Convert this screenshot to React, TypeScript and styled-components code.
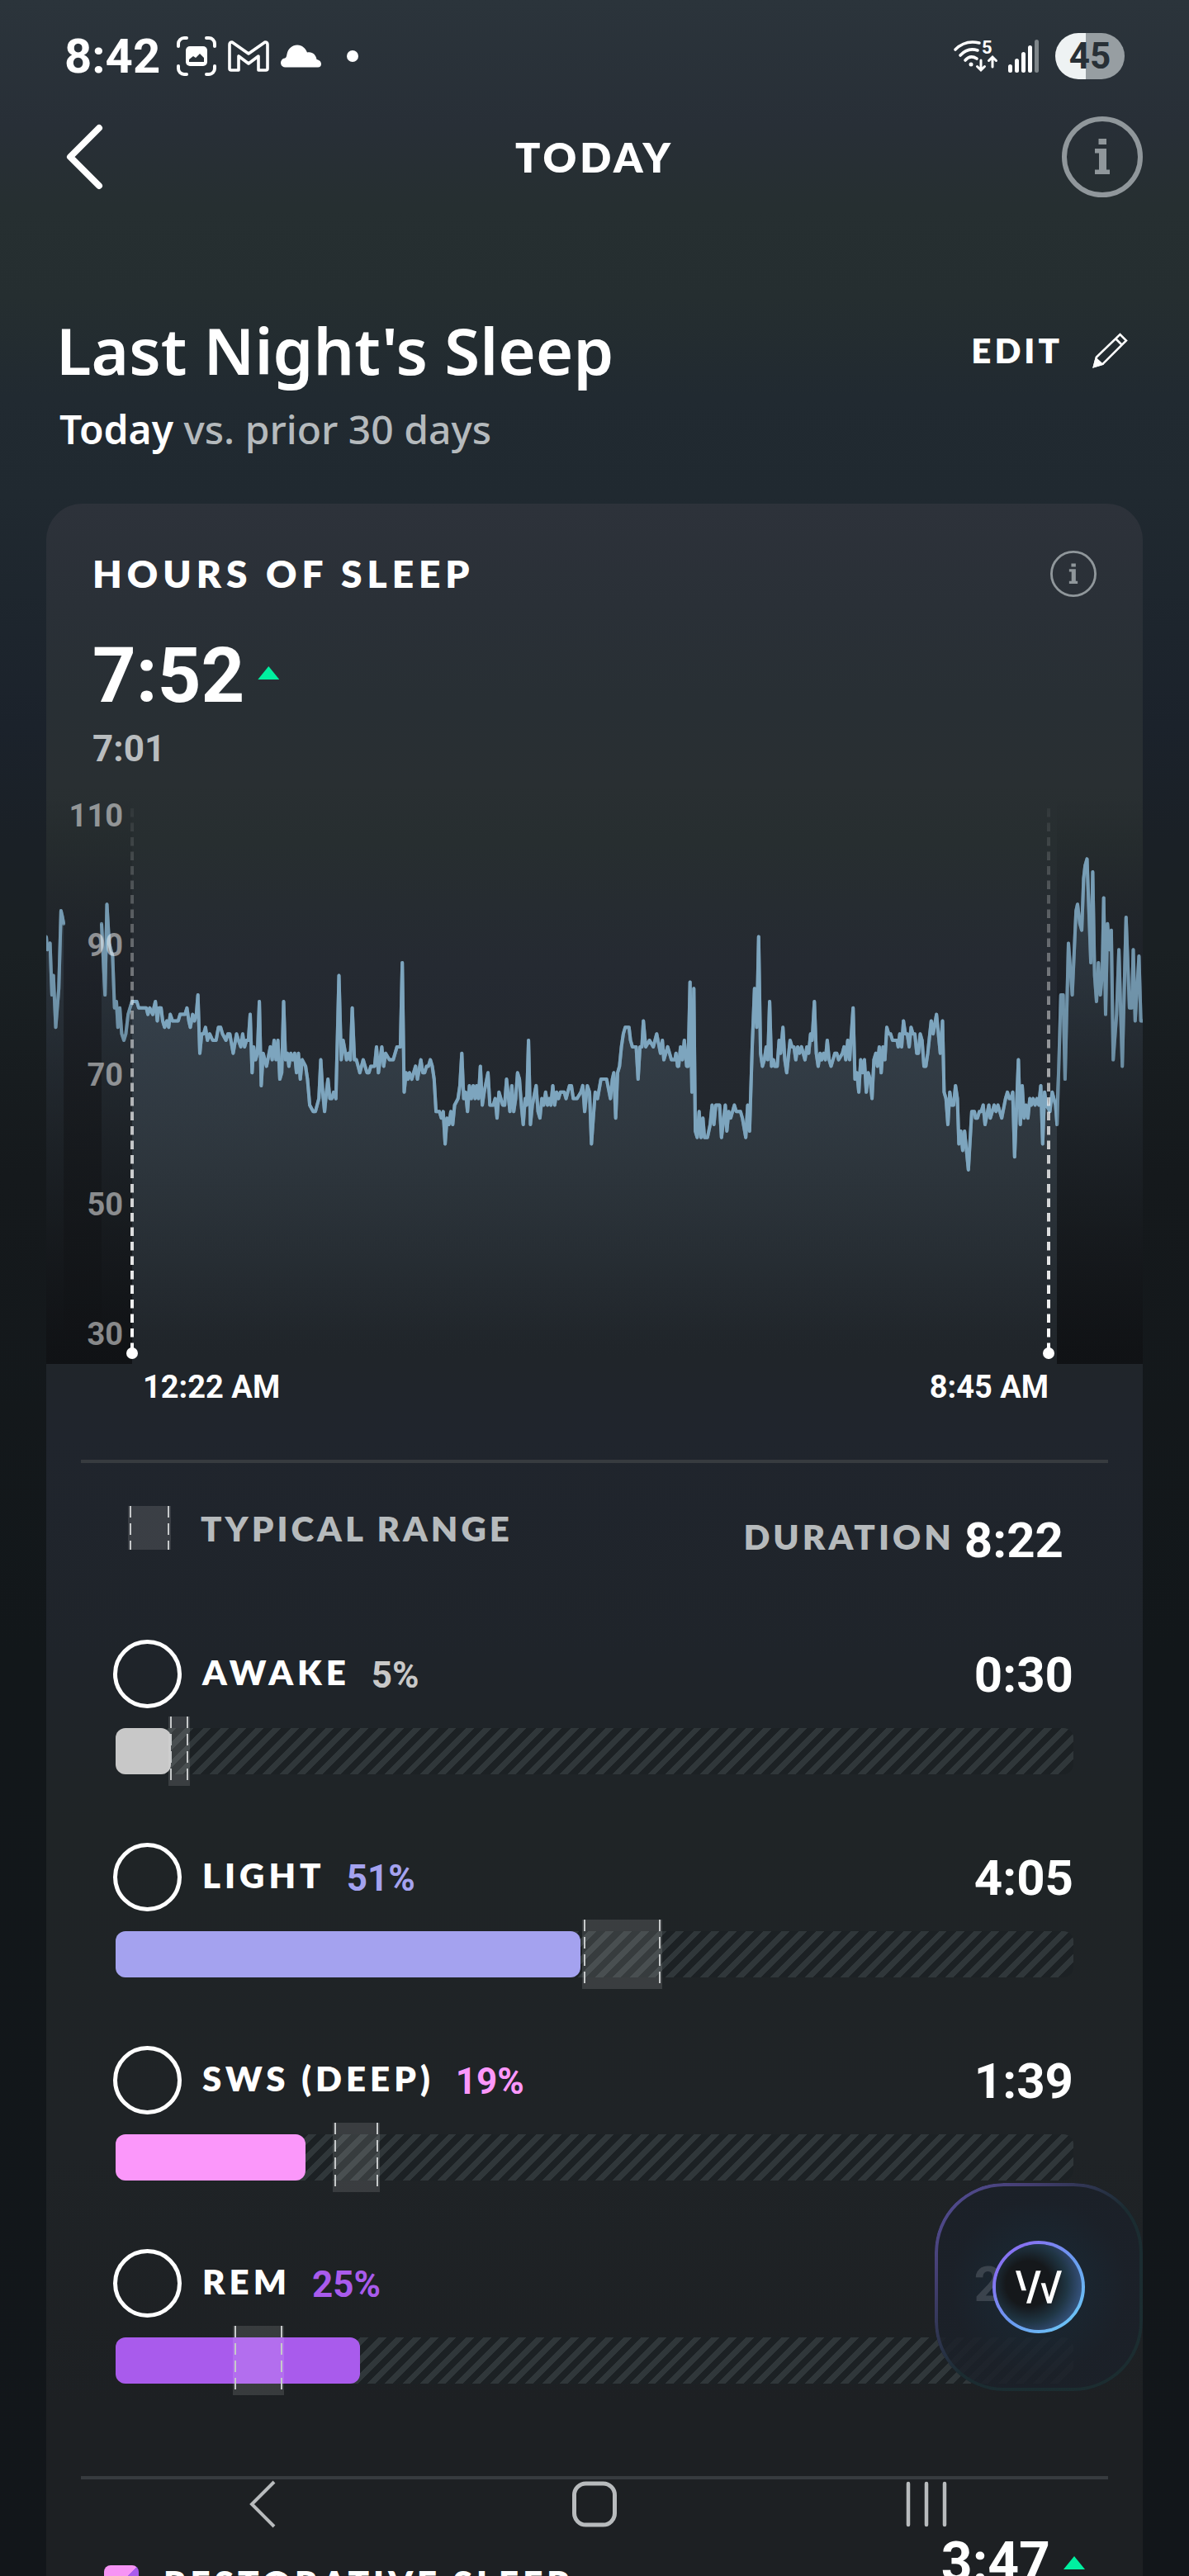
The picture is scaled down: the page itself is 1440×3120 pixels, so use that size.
import React from 'react';
import styled, { createGlobalStyle } from 'styled-components';

const GlobalStyle = createGlobalStyle`
  *, *::before, *::after { box-sizing: border-box; }
  html, body { margin: 0; padding: 0; background: #12161a; }
  button { background: none; border: 0; padding: 0; color: inherit; font: inherit; cursor: pointer; }
  h1, h2, p, ul { margin: 0; padding: 0; }
  svg { display: block; overflow: visible; }
`;

const sans = `Lato, 'Open Sans', sans-serif`;
const heading = `'Noto Sans', 'Open Sans', sans-serif`;
const digits = `Roboto, 'Liberation Sans', sans-serif`;

const Screen = styled.div`
  position: relative;
  height: 100vh;
  overflow: hidden;
  color: #fff;
  font-family: ${sans};
  background: linear-gradient(
    180deg, #2b343b 0, #282f37 150px, #262f31 250px, #252e30 360px, #212a31 480px,
    #202930 600px, #1b222b 880px, #1a2026 1020px, #1a2023 1150px, #15191c 1420px, #12171a 2000px, #12161a 100%
  );
`;

/* ---------- status bar ---------- */

const StatusBar = styled.div`
  display: flex;
  align-items: center;
  justify-content: space-between;
  height: 136px;
  padding: 0 78px 0 78px;
`;

const StatusGroup = styled.div<{ $gap: number }>`
  display: flex;
  align-items: center;
  gap: ${(p) => p.$gap}px;
`;

const Clock = styled.span`
  margin-right: 6px;
  font: 700 58px/64px ${digits};
`;

const Dot = styled.span`
  width: 14px;
  height: 14px;
  margin-left: 16px;
  border-radius: 50%;
  background: #fff;
`;

const Battery = styled.span`
  display: grid;
  place-items: center;
  width: 84px;
  height: 56px;
  margin-left: 8px;
  border-radius: 28px;
  background: linear-gradient(90deg, #eef2f3 44%, #979ea2 44%);
  color: #283036;
  font: 700 44px/56px ${digits};
`;

/* ---------- app bar ---------- */

const AppBar = styled.header`
  display: grid;
  grid-template-columns: 1fr auto 1fr;
  align-items: center;
  height: 108px;
  padding: 0 56px;
`;

const AppTitle = styled.h1`
  font: 800 50px/64px ${sans};
  letter-spacing: 4px;
`;

const IconButton = styled.button<{ $end?: boolean }>`
  display: inline-flex;
  justify-self: ${(p) => (p.$end ? 'end' : 'start')};
  padding-left: ${(p) => (p.$end ? 0 : 22)}px;
  color: ${(p) => (p.$end ? '#90979b' : '#fff')};
`;

/* ---------- page body ---------- */

const Main = styled.main`
  padding: 132px 56px 0;
`;

const TitleRow = styled.div`
  display: flex;
  align-items: center;
  justify-content: space-between;
  padding: 0 18px 0 12px;
`;

const PageTitle = styled.h2`
  font: 600 78px/96px ${heading};
`;

const EditButton = styled.button`
  display: flex;
  align-items: center;
  gap: 36px;
  font: 800 42px/56px ${sans};
  letter-spacing: 4px;
`;

const Subtitle = styled.p`
  margin-top: 16px;
  padding-left: 16px;
  color: #b5babd;
  font: 500 48px/64px ${heading};

  strong { color: #fff; font-weight: 600; }
`;

const Card = styled.section`
  margin-top: 58px;
  padding-top: 57px;
  border-radius: 44px 44px 0 0;
  background: linear-gradient(
    180deg, #2d323a 0, #2a3037 120px, #282f34 240px, #292f32 340px, #272e30 410px,
    #252a32 560px, #22272c 800px, #20252a 1040px, #20252d 1130px, #1f242a 1400px,
    #1f2426 1600px, #1f2326 2000px, #1d2023 2300px, #1d2023 100%
  );
`;

const CardHead = styled.div`
  display: flex;
  align-items: center;
  justify-content: space-between;
  padding: 0 56px;
`;

const Label = styled.span<{ $muted?: boolean }>`
  color: ${(p) => (p.$muted ? '#b6babc' : '#fff')};
  font: 800 42px/50px ${sans};
  letter-spacing: ${(p) => (p.$muted ? 4 : 5)}px;
`;

const CardTitle = styled.h2`
  font: 800 46px/56px ${sans};
  letter-spacing: 6px;
`;

const Headline = styled.div`
  display: flex;
  align-items: center;
  gap: 16px;
  margin-top: 48px;
  padding: 0 56px;
  font: 700 92px/96px ${digits};
`;

const Baseline = styled.p`
  margin: 14px 0 28px;
  padding: 0 56px;
  color: #b9bdbf;
  font: 700 44px/52px ${digits};
`;

const UpArrow = styled.span`
  width: 26px;
  height: 16px;
  background: #00f0a0;
  clip-path: polygon(50% 0, 100% 100%, 0 100%);

  ${Headline} & { margin-bottom: 8px; }
`;

/* ---------- chart ---------- */

const ChartFrame = styled.div`
  position: relative;

  svg { width: 100%; height: 691px; overflow: hidden; }
`;

const Axis = styled.div`
  position: absolute;
  top: 7px;
  left: 0;
  display: flex;
  flex-direction: column;
  gap: 117px;
  width: 93px;
  text-align: right;
  color: rgba(255, 255, 255, 0.5);
  font: 700 38px/40px ${digits};
`;

const TimeRow = styled.div`
  display: flex;
  justify-content: space-between;
  padding: 0 114px 0 117px;
  font: 700 38px/56px ${digits};
`;

const Divider = styled.hr<{ $space: number }>`
  height: 4px;
  margin: ${(p) => p.$space}px 42px 0;
  border: 0;
  background: #373b3f;
`;

/* ---------- sleep stages ---------- */

const rangeMarks = `
  background:
    repeating-linear-gradient(180deg, #c6c9ca 0 14px, transparent 14px 21px) 2px 0 / 2px 100% no-repeat,
    repeating-linear-gradient(180deg, #c6c9ca 0 14px, transparent 14px 21px) calc(100% - 2px) 0 / 2px 100% no-repeat,
    rgba(255, 255, 255, 0.12);
`;

const Legend = styled.div`
  display: flex;
  align-items: flex-start;
  justify-content: space-between;
  padding: 52px 96px 0 99px;
`;

const LegendItem = styled.div`
  display: flex;
  align-items: center;
  gap: 36px;
`;

const RangeSwatch = styled.span`
  width: 52px;
  height: 53px;
  ${rangeMarks}
`;

const Duration = styled.div`
  display: flex;
  align-items: flex-start;
  gap: 12px;
  padding-top: 12px;
`;

const Time = styled.span`
  font: 700 60px/60px ${digits};
`;

const StageList = styled.ul`
  display: flex;
  flex-direction: column;
  gap: 82px;
  margin-top: 89px;
  padding: 0 84px;
  list-style: none;
`;

const StageHead = styled.label`
  display: flex;
  align-items: center;
  height: 84px;
  margin-left: -3px;
  cursor: pointer;

  ${Label} { margin: 0 26px 0 25px; padding-bottom: 4px; }
  ${Time} { margin-left: auto; padding-top: 4px; }
`;

const StageRadio = styled.input`
  appearance: none;
  width: 83px;
  height: 83px;
  margin: 0;
  border: 5px solid #fff;
  border-radius: 50%;
`;

const Percent = styled.span<{ $color: string }>`
  padding-top: 4px;
  color: ${(p) => p.$color};
  font: 700 44px/54px ${digits};
`;

const Track = styled.div`
  position: relative;
  height: 56px;
  margin-top: 24px;
  border-radius: 12px;
  background: repeating-linear-gradient(135deg, #30373a 0 7px, #1c2124 7px 15px);
`;

const Fill = styled.div<{ $color: string }>`
  height: 100%;
  border-radius: 12px;
  background: ${(p) => p.$color};
`;

const TypicalRange = styled.div`
  position: absolute;
  top: -14px;
  bottom: -14px;
  ${rangeMarks}
`;

/* ---------- restorative row ---------- */

const Restorative = styled.div`
  display: flex;
  align-items: flex-start;
  justify-content: space-between;
  padding: 68px 70px 60px;
`;

const RestorativeName = styled.div`
  display: flex;
  align-items: center;
  gap: 30px;
  height: 42px;
  margin-top: 36px;
`;

const RestorativeSwatch = styled.span`
  width: 42px;
  height: 42px;
  border-radius: 8px;
  background: linear-gradient(135deg, #f694f4 50%, #a95bec 50%);
`;

const RestorativeTime = styled.div`
  display: flex;
  align-items: center;
  gap: 16px;
  font: 700 66px/66px ${digits};
`;

/* ---------- overlays ---------- */

const Coach = styled.button`
  && {
    position: absolute;
    right: 56px;
    bottom: 224px;
    display: grid;
    place-items: center;
    width: 252px;
    height: 252px;
    border: 4px solid transparent;
    border-radius: 84px;
    background: radial-gradient(circle at 50% 50%, rgba(26, 38, 50, 0.86) 30%, rgba(27, 32, 41, 0.86) 62%);
  }

  &::before {
    content: '';
    position: absolute;
    inset: -4px;
    border-radius: 84px;
    padding: 4px;
    background: linear-gradient(135deg, #57519c 0%, #453f73 22%, #1b2c31 52%, #1c2d30 100%);
    mask: linear-gradient(#000 0 0) content-box exclude, linear-gradient(#000 0 0);
  }
`;

const CoachMark = styled.span`
  display: grid;
  place-items: center;
  width: 112px;
  height: 112px;
  border: 4px solid transparent;
  border-radius: 50%;
  background:
    radial-gradient(circle at 38% 46%, #15181b 32%, rgba(28, 50, 60, 0.9) 55%, rgba(60, 90, 140, 0) 84%) padding-box,
    linear-gradient(120deg, #3d3a78, #3e6496) padding-box,
    linear-gradient(135deg, #8673f2 20%, #6a9cf0 55%, #6cc6f6 90%) border-box;
`;

const NavBar = styled.nav`
  position: absolute;
  right: 0;
  bottom: 58px;
  left: 0;
  display: grid;
  grid-template-columns: repeat(3, 1fr);
  place-items: center;
  padding: 0 117px;
  color: #b8bbbd;
`;

/* ---------- icons ---------- */

const InfoIcon = ({ size, ring }: { size: number; ring: number }) => (
  <svg width={size} height={size} viewBox="0 0 98 98" fill="currentColor" aria-hidden="true">
    <circle cx="49" cy="49" r={49 - ring / 2} fill="none" stroke="currentColor" strokeWidth={ring} />
    <path d="M44.5 27h9.500v7h-9.500zM40 39h14v25.500h4v5.500h-18v-5.500h5v-20h-5z" />
  </svg>
);

const CaptureIcon = () => (
  <svg width="48" height="48" viewBox="0 0 48 48" fill="none" stroke="#fff" strokeWidth="4" strokeLinecap="round" aria-hidden="true">
    <path d="M2 12V9a7 7 0 0 1 7-7h3M36 2h3a7 7 0 0 1 7 7v3M46 36v3a7 7 0 0 1-7 7h-3M12 46H9a7 7 0 0 1-7-7v-3" />
    <rect x="11" y="12" width="26" height="24" rx="5" fill="#fff" stroke="none" />
    <path d="M15 31v-3l5-4 3 2 5-5 5 5v5z" fill="#2a3239" stroke="none" />
  </svg>
);

const MailIcon = () => (
  <svg width="50" height="38" viewBox="0 0 50 38" fill="none" stroke="#fff" strokeWidth="3.600" strokeLinejoin="round" aria-hidden="true">
    <path d="M2 34V5Q2 2 5 2L25 16 45 2Q48 2 48 5V34Q48 36 46 36H37V19L25 28 13 19V36H4Q2 36 2 34Z" />
  </svg>
);

const CloudIcon = () => (
  <svg width="50" height="28" viewBox="0 0 50 28" fill="#fff" aria-hidden="true">
    <path d="M6 27.500a5.500 5.500 0 0 1-1-11C7 15.500 7 14 7.500 11.500 9 4.500 14 .5 20 .5c6 0 10 4 12 9 6-1.500 11 3 11.500 8.500 3 .5 5.500 2.500 5.500 5.500 0 2.500-1.500 4-4 4z" />
  </svg>
);

const WifiIcon = () => (
  <svg width="54" height="40" viewBox="0 0 54 40" fill="none" stroke="#fff" strokeWidth="3.600" strokeLinecap="round" aria-hidden="true">
    <path d="M2 12Q14 0 31 4M8 19Q17 9 29 13M14 25Q20 18 28 23" />
    <circle cx="21" cy="30" r="2.500" fill="#fff" stroke="none" />
    <path d="M33 25v11M28.500 32.500 33 37l4.500-4.500M47 33V22M42.500 25.500 47 21l4.500 4.500" strokeWidth="3" />
    <text x="34" y="17" fill="#fff" stroke="none" fontFamily="Roboto, sans-serif" fontWeight="700" fontSize="22">5</text>
  </svg>
);

const SignalIcon = () => (
  <svg width="37" height="40" viewBox="0 0 37 40" fill="#fff" aria-hidden="true">
    <rect x="0" y="30" width="5" height="10" rx="2.500" />
    <rect x="8" y="23" width="5" height="17" rx="2.500" />
    <rect x="16" y="15" width="5" height="25" rx="2.500" />
    <rect x="24" y="7" width="5" height="33" rx="2.500" />
    <rect x="32" y="0" width="5" height="40" rx="2.500" fill="#7f868a" />
  </svg>
);

const BackIcon = () => (
  <svg width="50" height="80" viewBox="0 0 50 80" fill="none" stroke="currentColor" strokeWidth="8" strokeLinecap="round" strokeLinejoin="round" aria-hidden="true">
    <path d="M42 5 7 40l35 35" />
  </svg>
);

const PencilIcon = () => (
  <svg width="43" height="43" viewBox="0 0 43 43" fill="none" stroke="#fff" strokeWidth="2.500" aria-hidden="true">
    <path d="M2 41 5 29.500 33.500 2 41 9.500 12.500 38ZM28 7l7.500 7.500" />
    <path d="M2 41l2.500-9.500 7 6.500z" fill="#fff" />
  </svg>
);

const CoachLogo = () => (
  <svg width="56" height="40" viewBox="0 0 168 118" fill="#fff" aria-hidden="true">
    <path d="M0 0h17l22 72H22zM74 0h18L55 118H39zM92 45h16l14 50L151 0h17l-38 118h-15z" />
  </svg>
);

/* ---------- heart rate data: tick,bpm ---------- */

const FIRST_TICK = 122;
const LAST_TICK = 3014;

const SEGMENTS = [
  `122,91 125,89 132,90 137,82 141,85 147,77 155,83 161,95 165,94 168,93`,
  `268,93 277,82 282,96 288,90 297,88 302,80 307,81 311,77 316,80 321,76 327,75 332,76 338,79 348,81 361,81
   366,80 386,80 390,79 395,80 403,79 406,80 410,81 415,78 419,80 425,80 429,78 434,77 440,78 445,77 449,79
   455,78 470,78 475,79 488,79 493,80 498,78 502,77 508,79 513,78 518,79 522,82 527,73 532,76 537,76 542,77
   547,75 553,76 561,75 570,75 576,77 582,77 587,76 596,75 601,76 606,76 615,73 624,76 629,75 635,74 640,76
   645,74 650,75 655,75 660,79 665,70 669,74 674,72 679,73 684,81 689,68 694,73 703,71 713,74 718,72 723,75
   728,72 733,75 738,69 743,70 748,81 753,72 758,73 762,71 767,73 772,72 777,73 782,70 787,73 792,69 797,72
   806,71 811,69 817,65 826,64 832,64 841,66 846,72 851,67 856,64 861,67 865,69 870,66 875,66 880,67 886,66
   894,85 900,72 905,75 914,72 919,73 924,72 929,80 935,72 940,72 949,70 958,72 968,70 973,70 978,71 988,71
   993,74 998,70 1007,74 1012,71 1017,73 1027,72 1037,72 1047,74 1056,74 1061,87 1066,67 1071,70 1076,69
   1080,70 1086,69 1096,71 1101,69 1110,72 1115,70 1120,70 1125,71 1130,71 1135,72 1140,71 1145,69 1150,64
   1159,64 1164,63 1169,64 1174,59 1179,63 1184,62 1189,64 1194,62 1199,65 1208,66 1213,68 1218,73 1223,66
   1228,67 1233,64 1238,68 1243,66 1248,68 1253,66 1257,68 1262,66 1267,71 1272,65 1277,67 1287,70 1292,65
   1301,65 1306,66 1311,63 1316,67 1326,65 1331,65 1336,69 1345,64 1350,68 1355,64 1360,66 1365,70 1370,69
   1375,65 1380,62 1385,66 1389,65 1394,75 1399,62 1404,65 1414,68 1419,64 1424,63 1429,66 1434,65 1439,67
   1444,65 1449,66 1453,65 1458,68 1463,65 1468,67 1473,66 1478,67 1488,67 1493,66 1502,68 1507,68 1512,66
   1522,66 1532,67 1537,68 1542,64 1549,68 1555,67 1560,59 1566,64 1570,67 1576,66 1585,69 1600,69 1610,66
   1615,69 1619,70 1624,63 1629,70 1634,71 1639,74 1644,76 1649,77 1659,77 1663,75 1668,74 1678,74 1683,69
   1688,74 1693,74 1697,78 1703,74 1713,75 1723,74 1732,76 1742,73 1747,75 1751,72 1761,74 1771,72 1780,72
   1783,73 1787,71 1790,71 1795,74 1800,72 1805,75 1811,71 1815,71 1820,84 1825,67 1830,83 1834,61 1839,60
   1844,64 1849,60 1854,63 1858,60 1866,60 1873,62 1878,65 1883,62 1888,65 1898,65 1903,60 1913,65 1917,61
   1922,64 1927,63 1937,65 1942,64 1953,64 1958,63 1967,60 1972,65 1977,61 1984,74 1990,83 1996,77 2001,91
   2006,73 2011,71 2016,72 2021,74 2025,72 2030,81 2035,71 2040,72 2043,71 2050,71 2055,75 2059,73 2065,77
   2070,72 2075,70 2084,75 2089,74 2094,74 2099,72 2104,74 2109,73 2114,74 2123,72 2128,74 2133,73 2138,76
   2142,75 2148,81 2153,73 2158,71 2163,73 2167,72 2172,73 2177,72 2182,75 2187,72 2192,71 2202,73 2207,73
   2212,72 2222,73 2226,74 2231,72 2236,75 2241,72 2250,80 2255,69 2260,70 2265,67 2270,72 2275,70 2280,72
   2285,67 2290,70 2295,69 2300,66 2305,72 2310,73 2314,71 2319,74 2324,70 2329,74 2334,72 2339,77 2344,76
   2349,76 2354,75 2366,75 2369,74 2373,76 2378,74 2383,78 2388,76 2393,76 2398,74 2403,77 2408,76 2413,76
   2418,73 2422,73 2427,76 2432,75 2437,71 2442,71 2447,73 2456,78 2461,76 2470,79 2475,76 2480,73 2486,78
   2490,67 2495,66 2500,62 2505,67 2510,65 2515,65 2520,68 2525,66 2529,59 2534,61 2539,58 2544,61 2554,55
   2563,64 2570,64 2573,63 2578,63 2583,64 2588,64 2593,65 2598,62 2608,65 2612,63 2622,65 2627,64 2632,65
   2642,63 2652,66 2657,67 2662,66 2667,66 2671,67 2676,57 2686,72 2691,62 2696,68 2701,63 2706,65 2711,63
   2716,66 2720,65 2725,66 2730,65 2735,66 2740,65 2745,68 2750,59 2755,67 2760,65 2769,64 2775,67 2784,65
   2788,62 2798,82 2804,82 2809,69 2818,90 2828,82 2838,95 2842,96 2848,93 2853,92 2858,100 2862,102 2867,103
   2877,87 2882,101 2887,85 2892,81 2897,87 2902,82 2907,85 2911,97 2916,79 2921,93 2926,89 2931,92 2936,72
   2945,79 2951,89 2960,71 2970,94 2979,80 2985,80 2989,89 2994,78 3004,88 3009,78 3014,78`,
];

const CHART_WIDTH = 1328;
const CHART_HEIGHT = 691;
const BPM_HEIGHT = 7.845;

const segmentPoints = SEGMENTS.map((segment) =>
  segment
    .trim()
    .split(/\s+/)
    .map((pair) => {
      const [tick, bpm] = pair.split(',').map(Number);
      return {
        x: ((tick - FIRST_TICK) / (LAST_TICK - FIRST_TICK)) * CHART_WIDTH,
        y: 887.4 - bpm * BPM_HEIGHT,
      };
    })
);

const linePath = (points: { x: number; y: number }[]) =>
  points.map((p, i) => `${i ? 'L' : 'M'}${p.x.toFixed(1)} ${p.y.toFixed(1)}`).join('');

const areaPath = (points: { x: number; y: number }[]) =>
  `${linePath(points)}V${CHART_HEIGHT}H${points[0].x.toFixed(1)}Z`;

const HeartRateChart = () => (
  <svg viewBox={`0 0 ${CHART_WIDTH} ${CHART_HEIGHT}`} preserveAspectRatio="none" role="img" aria-label="Heart rate during sleep">
    <defs>
      <linearGradient id="area" gradientUnits="userSpaceOnUse" x1="0" y1="130" x2="0" y2="670">
        <stop offset="0" stopColor="#7fa5bd" stopOpacity="0.22" />
        <stop offset="0.550" stopColor="#7f9fb5" stopOpacity="0.130" />
        <stop offset="1" stopColor="#7fa5bd" stopOpacity="0" />
      </linearGradient>
      <linearGradient id="shade" x1="0" y1="0" x2="0" y2="1">
        <stop offset="0" stopColor="#0a0b0d" stopOpacity="0" />
        <stop offset="0.300" stopColor="#0a0b0d" stopOpacity="0.250" />
        <stop offset="0.600" stopColor="#0a0b0d" stopOpacity="0.480" />
        <stop offset="1" stopColor="#0a0b0d" stopOpacity="0.720" />
      </linearGradient>
      <linearGradient id="marker" gradientUnits="userSpaceOnUse" x1="0" y1="15" x2="0" y2="678">
        <stop offset="0" stopColor="#fff" stopOpacity="0.040" />
        <stop offset="0.300" stopColor="#fff" stopOpacity="0.350" />
        <stop offset="0.600" stopColor="#fff" stopOpacity="0.720" />
        <stop offset="1" stopColor="#fff" />
      </linearGradient>
    </defs>
    {segmentPoints.map((points, i) => (
      <g key={i}>
        <path d={areaPath(points)} fill="url(#area)" />
        <path d={linePath(points)} fill="none" stroke="#7da5be" strokeWidth="4" strokeLinejoin="round" strokeLinecap="round" />
      </g>
    ))}
    <rect width="104" height={CHART_HEIGHT} fill="url(#shade)" />
    <rect x="1224" width="104" height={CHART_HEIGHT} fill="url(#shade)" />
    {segmentPoints.map((points, i) => (
      <path key={i} d={linePath(points)} fill="none" stroke="#7da5be" strokeOpacity="0.600" strokeWidth="4" strokeLinejoin="round" />
    ))}
    {[104, 1214].map((x) => (
      <g key={x}>
        <path d={`M${x} 18V678`} stroke="url(#marker)" strokeWidth="4" strokeDasharray="10.500 7" />
        <circle cx={x} cy="678" r="7" fill="#fff" />
      </g>
    ))}
  </svg>
);

const STAGES = [
  { name: 'AWAKE', percent: '5%', time: '0:30', color: '#c8c8c8', fill: 5.8, from: 5.5, to: 7.8 },
  { name: 'LIGHT', percent: '51%', time: '4:05', color: '#a4a2ef', fill: 48.5, from: 48.7, to: 57.1 },
  { name: 'SWS (DEEP)', percent: '19%', time: '1:39', color: '#fb97fa', fill: 19.8, from: 22.7, to: 27.6 },
  { name: 'REM', percent: '25%', time: '2:08', color: '#a95bec', fill: 25.5, from: 12.2, to: 17.6 },
];

export default function App() {
  return (
    <Screen>
      <GlobalStyle />
      <StatusBar>
        <StatusGroup $gap={14}>
          <Clock>8:42</Clock>
          <CaptureIcon />
          <MailIcon />
          <CloudIcon />
          <Dot />
        </StatusGroup>
        <StatusGroup $gap={12}>
          <WifiIcon />
          <SignalIcon />
          <Battery>45</Battery>
        </StatusGroup>
      </StatusBar>

      <AppBar>
        <IconButton aria-label="Back"><BackIcon /></IconButton>
        <AppTitle>TODAY</AppTitle>
        <IconButton $end aria-label="Information"><InfoIcon size={98} ring={6} /></IconButton>
      </AppBar>

      <Main>
        <TitleRow>
          <PageTitle>Last Night's Sleep</PageTitle>
          <EditButton>EDIT <PencilIcon /></EditButton>
        </TitleRow>
        <Subtitle><strong>Today</strong> vs. prior 30 days</Subtitle>

        <Card>
          <CardHead>
            <CardTitle>HOURS OF SLEEP</CardTitle>
            <IconButton $end aria-label="About hours of sleep"><InfoIcon size={56} ring={5} /></IconButton>
          </CardHead>
          <Headline>7:52<UpArrow /></Headline>
          <Baseline>7:01</Baseline>

          <ChartFrame>
            <HeartRateChart />
            <Axis>
              {[110, 90, 70, 50, 30].map((v) => <span key={v}>{v}</span>)}
            </Axis>
          </ChartFrame>
          <TimeRow><span>12:22 AM</span><span>8:45 AM</span></TimeRow>

          <Divider $space={60} />
          <Legend>
            <LegendItem><RangeSwatch /><Label $muted>TYPICAL RANGE</Label></LegendItem>
            <Duration><Label $muted>DURATION</Label><Time>8:22</Time></Duration>
          </Legend>

          <StageList>
            {STAGES.map((s) => (
              <li key={s.name}>
                <StageHead>
                  <StageRadio type="radio" name="stage" />
                  <Label>{s.name}</Label>
                  <Percent $color={s.color}>{s.percent}</Percent>
                  <Time>{s.time}</Time>
                </StageHead>
                <Track>
                  <Fill $color={s.color} style={{ width: `${s.fill}%` }} />
                  <TypicalRange style={{ left: `${s.from}%`, width: `${s.to - s.from}%` }} />
                </Track>
              </li>
            ))}
          </StageList>

          <Divider $space={112} />
          <Restorative>
            <RestorativeName><RestorativeSwatch /><Label>RESTORATIVE SLEEP</Label></RestorativeName>
            <RestorativeTime>3:47<UpArrow /></RestorativeTime>
          </Restorative>
        </Card>
      </Main>

      <Coach aria-label="Open coach">
        <CoachMark><CoachLogo /></CoachMark>
      </Coach>

      <NavBar>
        <button aria-label="Back">
          <svg width="34" height="58" viewBox="0 0 34 58" fill="none" stroke="currentColor" strokeWidth="4"><path d="M31 2 4 29l27 27" /></svg>
        </button>
        <button aria-label="Home">
          <svg width="54" height="58" viewBox="0 0 54 58" fill="none" stroke="currentColor" strokeWidth="5"><rect x="2.500" y="4" width="49" height="50" rx="14" /></svg>
        </button>
        <button aria-label="Recent apps">
          <svg width="50" height="58" viewBox="0 0 50 58" fill="none" stroke="currentColor" strokeWidth="4.500" strokeLinecap="round"><path d="M3 4v50M25 4v50M47 4v50" /></svg>
        </button>
      </NavBar>
    </Screen>
  );
}
